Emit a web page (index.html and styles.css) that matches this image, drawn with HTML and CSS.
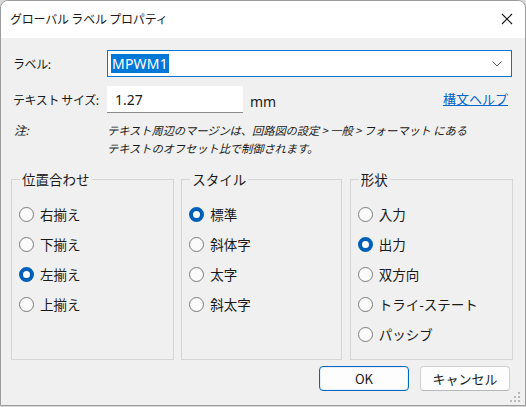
FILE: index.html
```html
<!DOCTYPE html>
<html lang="ja">
<head>
<meta charset="utf-8">
<link rel="stylesheet" href="styles.css">
</head>
<body>
<div class="window">
  <div class="titlebar">
    <span class="title">グローバル ラベル プロパティ</span>
    <svg class="close" width="12" height="12" viewBox="0 0 12 12"><path d="M1 1 L11 11 M11 1 L1 11" stroke="#1a1a1a" stroke-width="1.1" fill="none"/></svg>
  </div>
  <div class="content">
    <div class="row row1">
      <span class="lbl">ラベル:</span>
      <div class="combo">
        <span class="sel">MPWM1</span>
        <svg class="chev" width="10" height="6" viewBox="0 0 10 6"><path d="M0.5 0.5 L5 5 L9.5 0.5" stroke="#555" stroke-width="1" fill="none"/></svg>
      </div>
    </div>
    <div class="row row2">
      <span class="lbl">テキスト サイズ:</span>
      <div class="input">1.27</div>
      <span class="unit">mm</span>
      <a class="link">構文ヘルプ</a>
    </div>
    <div class="row note">
      <span class="lbl">注:</span>
      <p class="notetext">テキスト周辺のマージンは、回路図の設定 &gt; 一般 &gt; フォーマット にある<br>テキストのオフセット比で制御されます。</p>
    </div>
    <div class="groups">
      <fieldset class="group g1">
        <legend>位置合わせ</legend>
        <div class="radio"><span class="dot"></span>右揃え</div>
        <div class="radio"><span class="dot"></span>下揃え</div>
        <div class="radio"><span class="dot on"></span>左揃え</div>
        <div class="radio"><span class="dot"></span>上揃え</div>
      </fieldset>
      <fieldset class="group g2">
        <legend>スタイル</legend>
        <div class="radio"><span class="dot on"></span>標準</div>
        <div class="radio"><span class="dot"></span>斜体字</div>
        <div class="radio"><span class="dot"></span>太字</div>
        <div class="radio"><span class="dot"></span>斜太字</div>
      </fieldset>
      <fieldset class="group g3">
        <legend>形状</legend>
        <div class="radio"><span class="dot"></span>入力</div>
        <div class="radio"><span class="dot on"></span>出力</div>
        <div class="radio"><span class="dot"></span>双方向</div>
        <div class="radio"><span class="dot"></span>トライ-ステート</div>
        <div class="radio"><span class="dot"></span>パッシブ</div>
      </fieldset>
    </div>
    <div class="buttons">
      <button class="btn default">OK</button>
      <button class="btn">キャンセル</button>
    </div>
  </div>
  <svg class="grip" width="12" height="12" viewBox="0 0 12 12">
    <rect x="8" y="0" width="2" height="2" fill="#b8b8b8"/>
    <rect x="4" y="4" width="2" height="2" fill="#b8b8b8"/>
    <rect x="8" y="4" width="2" height="2" fill="#b8b8b8"/>
    <rect x="0" y="8" width="2" height="2" fill="#b8b8b8"/>
    <rect x="4" y="8" width="2" height="2" fill="#b8b8b8"/>
    <rect x="8" y="8" width="2" height="2" fill="#b8b8b8"/>
  </svg>
</div>
</body>
</html>
```
FILE: styles.css
```css
* { box-sizing: border-box; }
html, body {
  margin: 0;
  padding: 0;
  background: #d8d8d8;
}
body {
  font-family: "Noto Sans CJK JP", "Noto Sans", sans-serif;
  font-size: 13px;
  color: #1a1a1a;
}
.window {
  position: relative;
  width: 526px;
  height: 406px;
  background: #f0f0f0;
  border: 1px solid #9c9c9c;
  border-radius: 8px 8px 0 0;
  overflow: hidden;
}
.titlebar {
  height: 37px;
  background: #ffffff;
  display: flex;
  align-items: center;
  justify-content: space-between;
  padding: 0 12px 0 9px;
}
.title {
  font-size: 12px;
  letter-spacing: -0.2px;
  margin-top: -2px;
}
.close { margin-top: -2px; }
.content {
  padding: 12px 12px 0 12px;
}
.row {
  display: flex;
  align-items: center;
}
.lbl {
  width: 94px;
  flex: none;
  font-size: 12px;
  letter-spacing: -0.4px;
}
.combo {
  width: 405px;
  height: 27px;
  background: #fff;
  border: 1px solid #0078d4;
  display: flex;
  align-items: center;
  justify-content: space-between;
  padding: 0 9px 0 3px;
}
.sel {
  background: #0078d7;
  color: #fff;
  font-family: "Noto Sans", sans-serif;
  font-size: 14px;
  line-height: 19px;
  padding: 0 1px;
  letter-spacing: 0.2px;
}
.row2 {
  margin-top: 9px;
}
.input {
  width: 136px;
  height: 27px;
  background: #fff;
  border-bottom: 1px solid #8a8a8a;
  display: flex;
  align-items: center;
  padding-left: 8px;
  font-family: "Noto Sans", sans-serif;
  font-size: 14px;
}
.unit {
  margin-left: 7px;
  margin-top: 4px;
  font-family: "Noto Sans", sans-serif;
  font-size: 14px;
}
.link {
  margin-left: auto;
  margin-right: 5px;
  color: #0066cc;
  text-decoration: underline;
  font-size: 13px;
  margin-top: -2px;
}
.note {
  margin-top: 8px;
  align-items: flex-start;
  font-style: italic;
}
.note .lbl { font-size: 12px; line-height: 18px; padding-left: 1px; }
.notetext {
  margin: 0;
  font-size: 11.3px;
  line-height: 18px;
  letter-spacing: -0.1px;
}
.groups {
  display: flex;
  gap: 7px;
  margin-top: 12px;
  margin-left: -2px;
}
.group {
  margin: 0;
  height: 191px;
  border: 1px solid #d5d5d5;
  padding: 10px 7px 0 7px;
  display: flex;
  flex-direction: column;
  gap: 0;
}
.g1 { width: 165px; }
.g2 { width: 162px; }
.g3 { width: 165px; margin-left: 1px; }
legend {
  font-size: 13.5px;
  padding: 0 2px;
  margin-left: 1px;
}
.radio {
  display: flex;
  align-items: center;
  height: 30px;
  font-size: 13.5px;
}
.dot {
  width: 15px;
  height: 15px;
  border: 1px solid #7a7a7a;
  border-radius: 50%;
  margin-right: 6px;
  background: #fbfbfb;
  flex: none;
}
.dot.on {
  border: 4.5px solid #005fb8;
  background: #fff;
}
.buttons {
  display: flex;
  justify-content: flex-end;
  gap: 11px;
  margin-top: 6px;
  padding-right: 3px;
}
.btn {
  width: 90px;
  height: 25px;
  background: #fdfdfd;
  border: 1px solid #d0d0d0;
  border-bottom-color: #b8b8b8;
  border-radius: 4px;
  font-family: "Noto Sans CJK JP", "Noto Sans", sans-serif;
  font-size: 13px;
  color: #1a1a1a;
  padding: 0;
}
.btn.default {
  border: 1px solid #0067c0;
  box-shadow: inset 0 0 0 1px #e6f0fa;
}
.grip {
  position: absolute;
  right: 3px;
  bottom: 1px;
}
```
